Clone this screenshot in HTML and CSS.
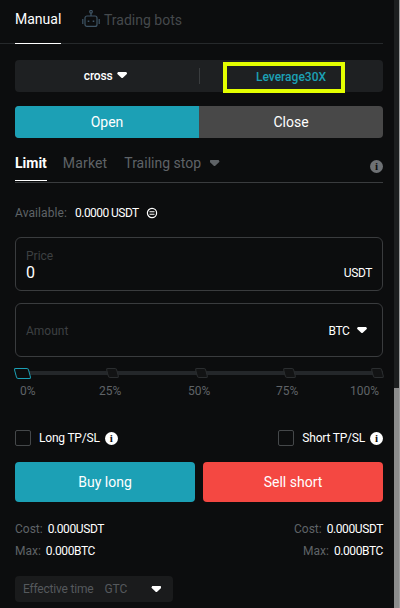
FILE: index.html
```html
<!DOCTYPE html>
<html lang="en">
<head>
    <meta charset="UTF-8">
    <meta name="viewport" content="width=device-width, initial-scale=1.0">
    <title>Trade</title>
    <link rel="stylesheet" href="styles.css">
</head>
<body>
    <div class="page">
        <div class="panel">
            <div class="top-tabs">
                <a class="top-tab active">Manual</a>
                <a class="top-tab bots">
                    <svg width="18" height="17" viewBox="0 0 18 17" fill="none" stroke="#3f5566" stroke-width="1.2">
                        <circle cx="9" cy="1.8" r="1.3"/>
                        <path d="M9 3v3"/>
                        <rect x="3" y="6" width="12" height="10.4" rx="2"/>
                        <path d="M0.8 9v5M17.2 9v5"/>
                        <path d="M6.5 10.5v1.5M11.5 10.5v1.5" stroke-width="1.6"/>
                    </svg>
                    Trading bots
                </a>
            </div>

            <div class="margin-bar">
                <div class="margin-mode">cross <span class="caret"></span></div>
                <div class="margin-sep"></div>
                <div class="leverage-cell"><div class="leverage-box">Leverage30X</div></div>
            </div>

            <div class="switch">
                <div class="switch-item on">Open</div>
                <div class="switch-item">Close</div>
            </div>

            <div class="order-tabs">
                <a class="order-tab active">Limit</a>
                <a class="order-tab market">Market</a>
                <a class="order-tab">Trailing stop <span class="caret gray"></span></a>
                <span class="info gray-info order-info">i</span>
            </div>

            <div class="available">
                <span class="muted">Available:</span>
                <span class="avail-value">0.0000 USDT</span>
                <svg width="12" height="12" viewBox="0 0 12 12" fill="none" stroke="#fff">
                    <circle cx="6" cy="6" r="4.6" stroke-width="1.2"/>
                    <path d="M3.5 4.8h5M8.5 7.2h-5" stroke-width="1.1"/>
                </svg>
            </div>

            <div class="field price">
                <div class="field-main">
                    <div class="field-label">Price</div>
                    <div class="field-value">0</div>
                </div>
                <div class="unit">USDT</div>
            </div>

            <div class="field amount">
                <div class="field-label">Amount</div>
                <div class="unit">BTC <span class="caret"></span></div>
            </div>

            <div class="slider">
                <div class="slider-track">
                    <span class="mark first"></span>
                    <span class="mark"></span>
                    <span class="mark"></span>
                    <span class="mark"></span>
                    <span class="mark"></span>
                </div>
                <div class="slider-labels">
                    <span>0%</span>
                    <span>25%</span>
                    <span>50%</span>
                    <span>75%</span>
                    <span>100%</span>
                </div>
            </div>

            <div class="tp-row">
                <label class="tp"><span class="check"></span><span class="tp-text">Long TP/SL</span><span class="info">i</span></label>
                <label class="tp"><span class="check"></span><span class="tp-text">Short TP/SL</span><span class="info">i</span></label>
            </div>

            <div class="actions">
                <button class="btn buy">Buy long</button>
                <button class="btn sell">Sell short</button>
            </div>

            <div class="stats">
                <div class="stat-col">
                    <div class="stat"><span class="muted">Cost:</span> <span class="tight">0.000USDT</span></div>
                    <div class="stat"><span class="muted">Max:</span> <span class="tight">0.000BTC</span></div>
                </div>
                <div class="stat-col right">
                    <div class="stat"><span class="muted">Cost:</span> <span class="tight">0.000USDT</span></div>
                    <div class="stat"><span class="muted">Max:</span> <span class="tight">0.000BTC</span></div>
                </div>
            </div>

            <div class="effective">
                <span class="eff-label">Effective time</span>
                <span class="gtc">GTC</span>
                <span class="caret"></span>
            </div>
        </div>
        <div class="scrollbar"><div class="scroll-thumb"></div></div>
    </div>
</body>
</html>
```

FILE: styles.css
```css
* {
    box-sizing: border-box;
}
html, body {
    margin: 0;
    height: 100%;
    overflow: hidden;
}
body {
    background: #0c0d0e;
    color: #fff;
    font-family: Roboto, Arial, sans-serif;
    font-size: 12px;
}
.page {
    display: flex;
    height: 608px;
}
.panel {
    width: 394px;
    padding-right: 11px;
    overflow: hidden;
}
.scrollbar {
    width: 6px;
    background: #1c1e1f;
    border-right: 1px solid #a0a0a0;
    padding-top: 388px;
}
.scroll-thumb {
    height: 220px;
    background: #8c8c8c;
}
.tight {
    letter-spacing: -0.4px;
}

/* top tabs */
.top-tabs {
    display: flex;
    height: 44px;
    padding-left: 15px;
    border-bottom: 1px solid #26292b;
}
.top-tab {
    height: 44px;
    line-height: 38px;
    font-size: 14px;
    margin-right: 21px;
}
.top-tab.active {
    width: 46px;
    white-space: nowrap;
    border-bottom: 1px solid #fff;
}
.top-tab.bots {
    display: flex;
    align-items: center;
    gap: 4px;
    height: 40px;
    color: #45494c;
}
.top-tab.bots svg {
    margin-bottom: 4px;
}

.margin-bar {
    display: flex;
    align-items: center;
    height: 32px;
    margin: 16px 0 0 15px;
    background: #1e2022;
    border-radius: 4px;
}
.margin-mode {
    width: 184px;
    padding-right: 3px;
    text-align: center;
    font-weight: 500;
    font-size: 12px;
    letter-spacing: -0.2px;
}
.margin-sep {
    width: 1px;
    height: 16px;
    background: #3a3d3f;
}
.leverage-cell {
    padding: 2px 0 0 23px;
}
.leverage-box {
    width: 122px;
    height: 31px;
    line-height: 23px;
    padding-left: 14px;
    text-align: center;
    border: 4px solid #e4ff00;
    color: #1ca0b5;
    font-size: 12px;
    font-weight: 500;
    margin-top: 1px;
}

.caret {
    display: inline-block;
    width: 10px;
    height: 6px;
    background: #fff;
    clip-path: polygon(8% 0, 92% 0, 100% 30%, 55% 100%, 45% 100%, 0 30%);
    margin-left: 2px;
    vertical-align: 2px;
}
.caret.gray {
    background: #5f6367;
    margin-left: 5px;
}

.switch {
    display: flex;
    height: 32px;
    margin: 14px 0 0 15px;
    border-radius: 4px;
    overflow: hidden;
    background: #484848;
}
.switch-item {
    flex: 1;
    text-align: center;
    line-height: 32px;
    font-size: 14px;
}
.switch-item.on {
    background: #1ca0b5;
}

.order-tabs {
    display: flex;
    align-items: flex-start;
    height: 45px;
    margin: 0 0 0 15px;
    padding-top: 14px;
    border-bottom: 1px solid #3a3c3e;
}
.order-tab {
    height: 29px;
    font-size: 14px;
    line-height: 22px;
    color: #5f6367;
    margin-right: 16px;
}
.order-tab.market {
    margin-right: 17px;
    letter-spacing: 0.15px;
}
.order-tab.active {
    color: #fff;
    font-weight: 700;
    border-bottom: 1px solid #fff;
    height: 29px;
}
.info {
    display: inline-block;
    width: 13px;
    height: 13px;
    border-radius: 50%;
    background: #fff;
    color: #0c0d0e;
    font: bold 11px/13px "Liberation Serif", serif;
    text-align: center;
}
.gray-info {
    background: #6e7174;
}
.order-info {
    margin: 8px 0 0 auto;
}

.available {
    display: flex;
    align-items: center;
    gap: 7px;
    margin: 22px 0 0 15px;
    font-size: 12px;
    height: 16px;
}
.available .muted {
    letter-spacing: 0.1px;
    margin-right: 1px;
}
.avail-value {
    letter-spacing: -0.55px;
}
.muted {
    color: #5f6367;
}

.field {
    display: flex;
    justify-content: space-between;
    height: 54px;
    margin: 16px 0 0 15px;
    padding: 0 10px;
    border: 1px solid #3a3c3e;
    border-radius: 6px;
}
.field.amount {
    align-items: center;
    margin-top: 12px;
    padding-top: 2px;
    padding-right: 15px;
}
.field-label {
    color: #3d4042;
    font-size: 12px;
}
.field.price .field-label {
    line-height: 16px;
    padding-top: 10px;
}
.field-value {
    font-size: 16px;
    line-height: 20px;
    margin-top: -1px;
}
.unit {
    font-size: 12px;
    letter-spacing: -0.4px;
}
.field.price .unit {
    padding-top: 28px;
}
.field.amount .unit .caret {
    margin-left: 5px;
}

.slider {
    margin: 10px 0 0 15px;
}
.slider-track {
    display: flex;
    justify-content: space-between;
    align-items: center;
    height: 12px;
    background: linear-gradient(#24272a, #24272a) center / 100% 4px no-repeat;
}
.mark {
    width: 11px;
    height: 10px;
    background: #121314;
    border: 1.5px solid #2b2e30;
    border-radius: 2px;
    transform: skewX(15deg);
}
.mark.first {
    width: 15px;
    height: 11px;
    border-color: #1ca0b5;
    background: #0c0d0e;
}
.slider-labels {
    display: grid;
    grid-template-columns: 79px 89px 88px 74px 29px;
    margin-top: 4px;
    padding-left: 5px;
    color: #5f6367;
    font-size: 12px;
    line-height: 16px;
}

.tp-row {
    display: flex;
    justify-content: space-between;
    margin: 31px 0 0 15px;
}
.tp {
    display: flex;
    align-items: center;
    height: 16px;
}
.check {
    width: 16px;
    height: 16px;
    border: 1px solid #45484a;
    border-radius: 2px;
    margin-right: 8px;
}
.tp-text {
    margin-right: 5px;
    font-size: 12px;
    letter-spacing: -0.2px;
}

.actions {
    display: flex;
    gap: 8px;
    margin: 16px 0 0 15px;
}
.btn {
    flex: 1;
    height: 40px;
    border: none;
    border-radius: 4px;
    color: #fff;
    font: 14px Roboto, Arial, sans-serif;
}
.btn.buy {
    background: #1ca0b5;
}
.btn.sell {
    background: #f44842;
}

.stats {
    display: flex;
    justify-content: space-between;
    margin: 16px 0 0 15px;
}
.stat-col.right {
    text-align: right;
}
.stat {
    font-size: 12px;
    line-height: 22px;
}
.stat .muted {
    margin-right: 2px;
}

.effective {
    display: flex;
    align-items: center;
    width: 158px;
    height: 26px;
    margin: 14px 0 0 15px;
    padding: 0 8px;
    background: #1a1b1c;
    border-radius: 4px;
    color: #55595c;
    font-size: 12px;
}
.eff-label {
    white-space: nowrap;
    letter-spacing: -0.2px;
}
.gtc {
    margin-left: 11px;
}
.effective .caret {
    margin-left: 24px;
}
```
